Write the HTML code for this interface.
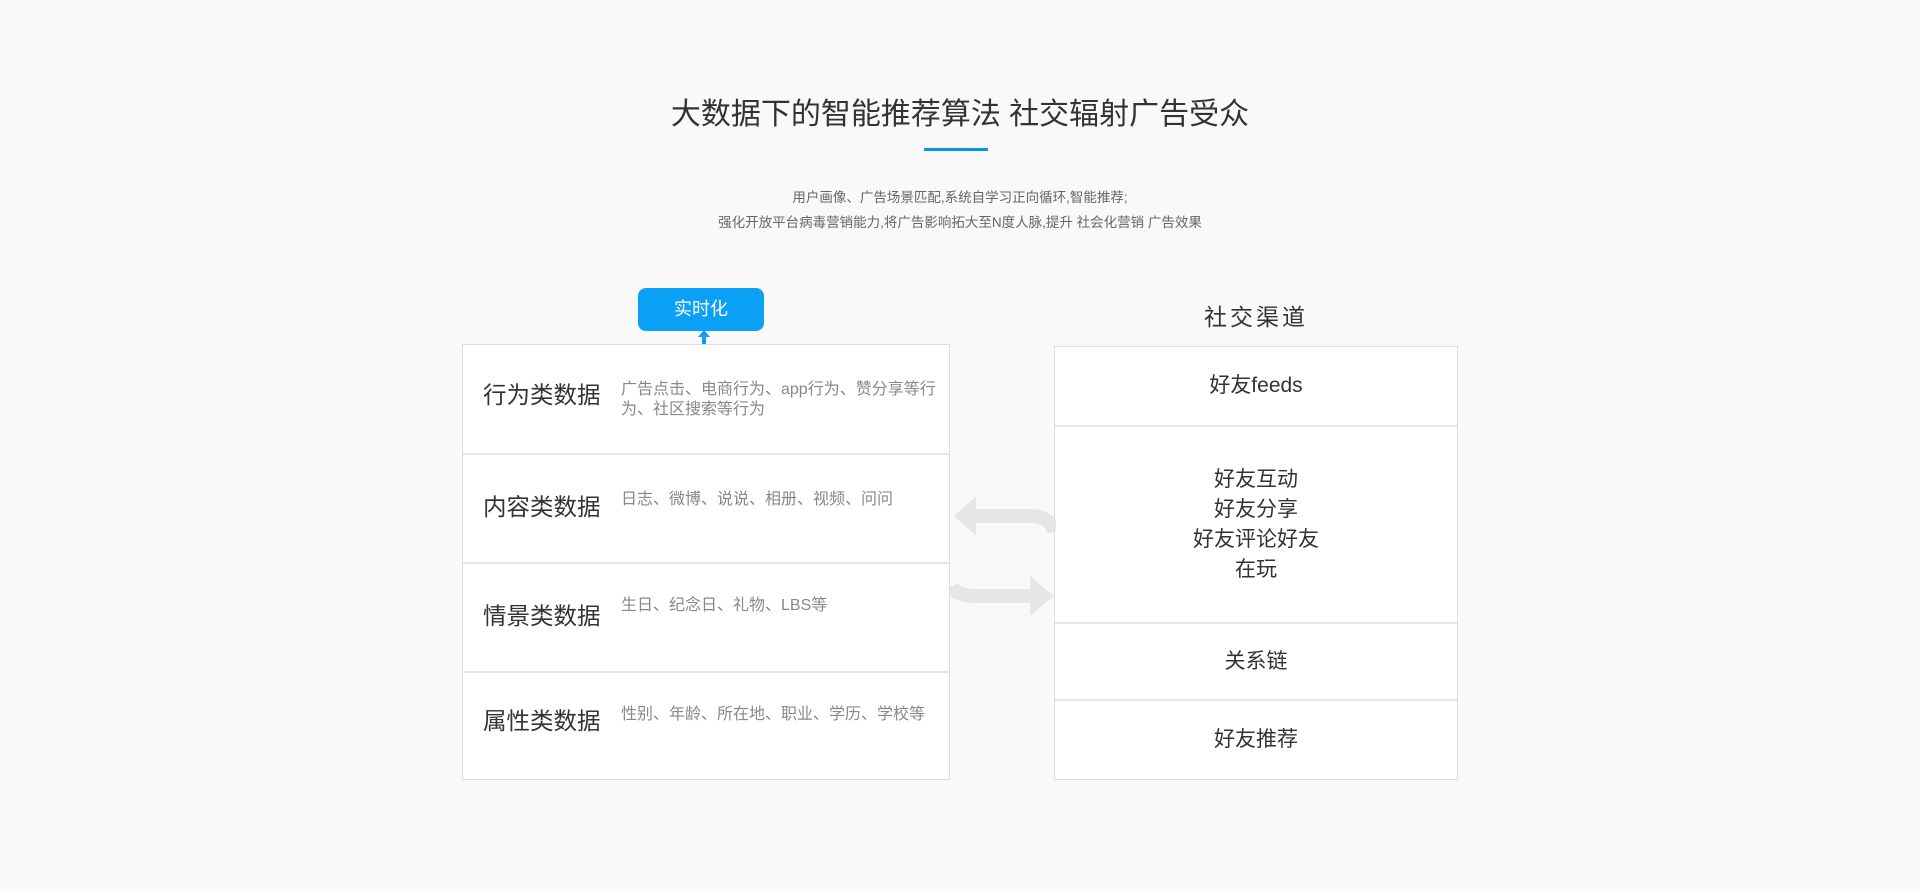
<!DOCTYPE html>
<html><head><meta charset="utf-8"><style>
*{margin:0;padding:0;box-sizing:border-box}
body{width:1920px;height:889px;background:#f9f9f9;font-family:"Liberation Sans","Noto Sans CJK SC",sans-serif;position:relative;overflow:hidden;color:#333}
.a{position:absolute}
h1{position:absolute;left:0;width:1920px;top:95px;text-align:center;font-size:30px;font-weight:normal;color:#333;line-height:40px}
.line{left:924px;top:148px;width:64px;height:3px;background:#0a94e4}
.sub{left:0;width:1920px;text-align:center;font-size:13.5px;color:#666;line-height:25px;top:185px}
.btn{left:638px;top:288px;width:126px;height:43px;background:#0aa0f6;border-radius:8px;color:#fff;font-size:18px;text-align:center;line-height:43px}
.lb{left:462px;top:344px;width:488px;height:436px;background:#fff;border:1px solid #ddd}
.row{position:absolute;left:0;width:486px;border-bottom:2px solid #e5e5e5}
.row .t{position:absolute;left:20px;font-size:23.5px;color:#333}
.row .d{position:absolute;left:158px;width:330px;font-size:16px;color:#888;line-height:20px}
.rb{left:1054px;top:346px;width:404px;height:434px;background:#fff;border:1px solid #ddd}
.rr{position:absolute;left:0;width:402px;border-bottom:2px solid #e5e5e5;display:flex;align-items:center;justify-content:center;text-align:center;font-size:21px;line-height:30px;color:#333}
</style></head><body>
<h1>大数据下的智能推荐算法 社交辐射广告受众</h1>
<div class="a line"></div>
<div class="a sub">用户画像、广告场景匹配,系统自学习正向循环,智能推荐;<br>强化开放平台病毒营销能力,将广告影响拓大至N度人脉,提升 社会化营销 广告效果</div>
<div class="a btn">实时化</div>
<svg class="a" style="left:696px;top:329px" width="16" height="16"><path d="M8 1 L14 8 L10 8 L10 16 L6 16 L6 8 L2 8 Z" fill="#0aa0f6"/></svg>
<div class="a lb">
<div class="row" style="top:0;height:110px"><span class="t" style="top:31px">行为类数据</span><span class="d" style="top:35px">广告点击、电商行为、app行为、赞分享等行为、社区搜索等行为</span></div>
<div class="row" style="top:110px;height:109px"><span class="t" style="top:33px">内容类数据</span><span class="d" style="top:35px">日志、微博、说说、相册、视频、问问</span></div>
<div class="row" style="top:219px;height:109px"><span class="t" style="top:33px">情景类数据</span><span class="d" style="top:32px">生日、纪念日、礼物、LBS等</span></div>
<div class="row" style="top:328px;height:107px;border:none"><span class="t" style="top:29px">属性类数据</span><span class="d" style="top:32px">性别、年龄、所在地、职业、学历、学校等</span></div>
</div>
<div class="a" style="left:1054px;top:298px;width:404px;text-align:center;font-size:23px;color:#333;letter-spacing:3px">社交渠道</div>
<div class="a rb">
<div class="rr" style="top:0;height:80px">好友feeds</div>
<div class="rr" style="top:80px;height:197px">好友互动<br>好友分享<br>好友评论好友<br>在玩</div>
<div class="rr" style="top:277px;height:77px">关系链</div>
<div class="rr" style="top:354px;height:78px;border:none">好友推荐</div>
</div>
<svg class="a" style="left:950px;top:490px" width="106" height="125">
<path d="M104 42 Q100 26 80 26 L24 26" stroke="#e6e6e6" stroke-width="14" fill="none"/>
<path d="M4 26 L26 6 L26 46 Z" fill="#e6e6e6"/>
<path d="M2 96 Q6 106 26 106 L80 106" stroke="#e6e6e6" stroke-width="14" fill="none"/>
<path d="M104 106 L80 86 L80 126 Z" fill="#e6e6e6"/>
</svg>
</body></html>
